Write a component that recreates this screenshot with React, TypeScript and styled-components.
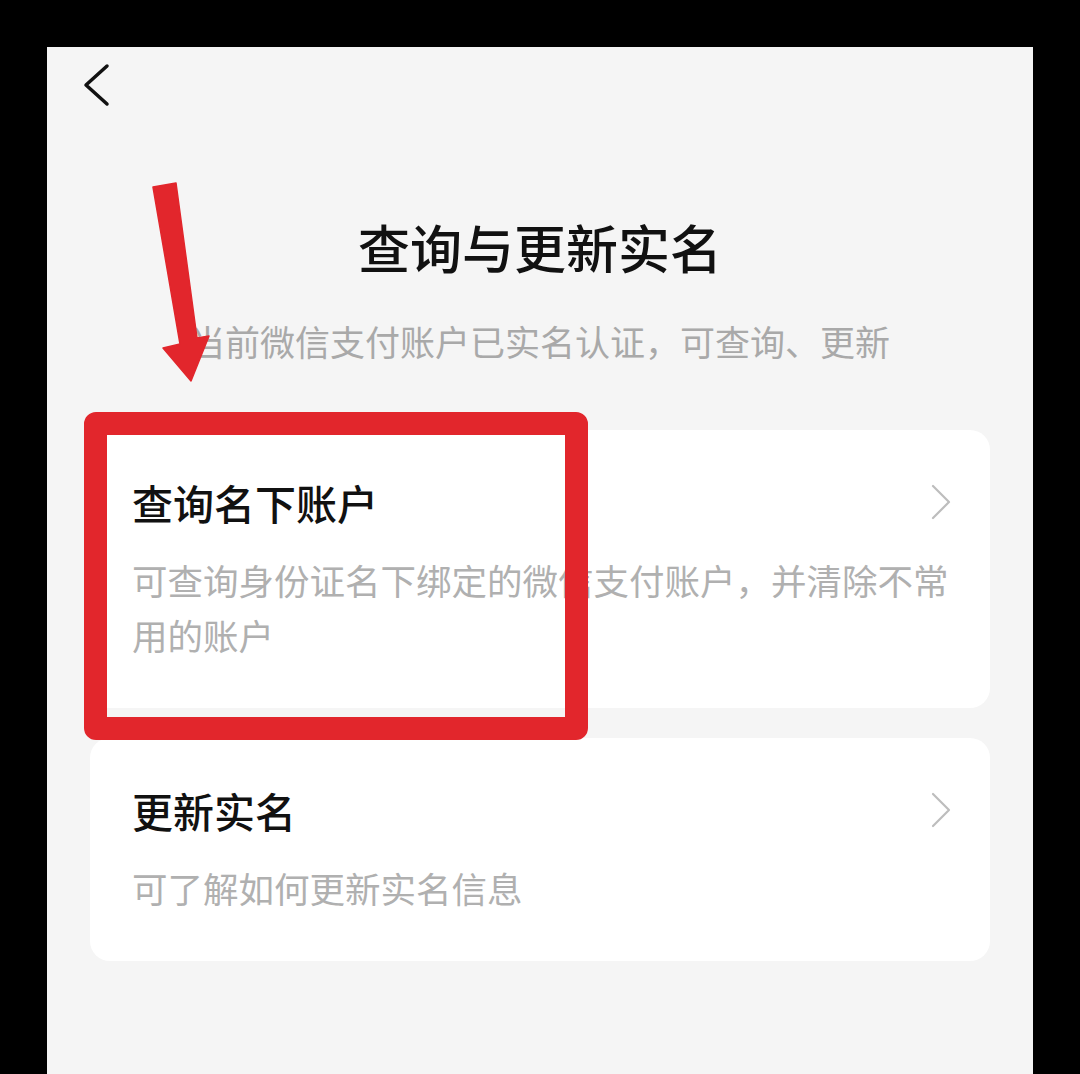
import styled, { createGlobalStyle } from "styled-components";

const GlobalStyle = createGlobalStyle`
  html, body {
    margin: 0;
    padding: 0;
    background: #000;
  }
  body {
    font-family: "Noto Sans CJK SC", "Noto Sans", sans-serif;
  }
`;

const Page = styled.div`
  width: 1080px;
  height: 1074px;
  overflow: hidden;
  padding: 47px 47px 0 47px;
  box-sizing: border-box;
  background: #000;
`;

const Screen = styled.main`
  position: relative;
  width: 986px;
  height: 1027px;
  background-color: #f5f5f5;
  display: flex;
  flex-direction: column;
`;

const NavBar = styled.header`
  height: 76px;
  display: flex;
  align-items: center;
  padding-left: 36px;
`;

const BackButton = styled.button`
  border: none;
  background: none;
  padding: 0;
  width: 30px;
  height: 44px;
  display: flex;
  align-items: center;
  cursor: pointer;
`;

const Title = styled.h1`
  margin: 94px 0 0 0;
  font-size: 52px;
  line-height: 60px;
  font-weight: 500;
  color: #111;
  text-align: center;
`;

const Subtitle = styled.p`
  margin: 42px 0 0 0;
  font-size: 35px;
  line-height: 44px;
  color: #a9a9a9;
  text-align: center;
`;

const CardList = styled.section`
  margin: 67px 43px 0 43px;
  display: flex;
  flex-direction: column;
  gap: 30px;
`;

const Card = styled.div`
  background: #fff;
  border-radius: 20px;
  padding: 48px 38px 46px 42px;
`;

const CardHead = styled.div`
  display: flex;
  align-items: center;
  justify-content: space-between;
`;

const CardTitle = styled.h2`
  margin: 0;
  font-size: 41px;
  line-height: 48px;
  font-weight: 500;
  color: #111;
`;

const CardDesc = styled.p`
  margin: 26px 0 0 0;
  font-size: 35.5px;
  line-height: 55px;
  color: #b0b0b0;
  max-width: 822px;
`;

const Highlight = styled.div`
  position: absolute;
  left: 37px;
  top: 365px;
  width: 504px;
  height: 328px;
  box-sizing: border-box;
  border: 23px solid #e2262c;
  border-radius: 12px;
  pointer-events: none;
`;

const Arrow = styled.svg`
  position: absolute;
  left: 103px;
  top: 133px;
  pointer-events: none;
`;

function Chevron({ dir, color, width }: { dir: "left" | "right"; color: string; width: number }) {
  const d = dir === "left" ? "M24 3 L3 22 L24 41" : "M3 3 L19 19 L3 35";
  return (
    <svg width={dir === "left" ? 28 : 22} height={dir === "left" ? 44 : 38} viewBox={dir === "left" ? "0 0 28 44" : "0 0 22 38"}>
      <path d={d} fill="none" stroke={color} strokeWidth={width} strokeLinecap="round" strokeLinejoin="round" />
    </svg>
  );
}

const items = [
  {
    title: "查询名下账户",
    desc: "可查询身份证名下绑定的微信支付账户，并清除不常用的账户",
  },
  {
    title: "更新实名",
    desc: "可了解如何更新实名信息",
  },
];

export default function App() {
  return (
    <Page>
      <GlobalStyle />
      <Screen>
        <NavBar>
          <BackButton aria-label="返回">
            <Chevron dir="left" color="#111" width={3.5} />
          </BackButton>
        </NavBar>
        <Title>查询与更新实名</Title>
        <Subtitle>当前微信支付账户已实名认证，可查询、更新</Subtitle>
        <CardList>
          {items.map((item) => (
            <Card key={item.title}>
              <CardHead>
                <CardTitle>{item.title}</CardTitle>
                <Chevron dir="right" color="#bdbdbd" width={2.2} />
              </CardHead>
              <CardDesc>{item.desc}</CardDesc>
            </Card>
          ))}
        </CardList>
        <Highlight />
        <Arrow width="64" height="206" viewBox="0 0 64 206">
          <polygon
            points="3,7 26,3 47,158 59,156 41,201 13,168 30,164"
            fill="#e2262c"
            stroke="#e2262c"
            strokeWidth="1.5"
            strokeLinejoin="round"
          />
        </Arrow>
      </Screen>
    </Page>
  );
}
